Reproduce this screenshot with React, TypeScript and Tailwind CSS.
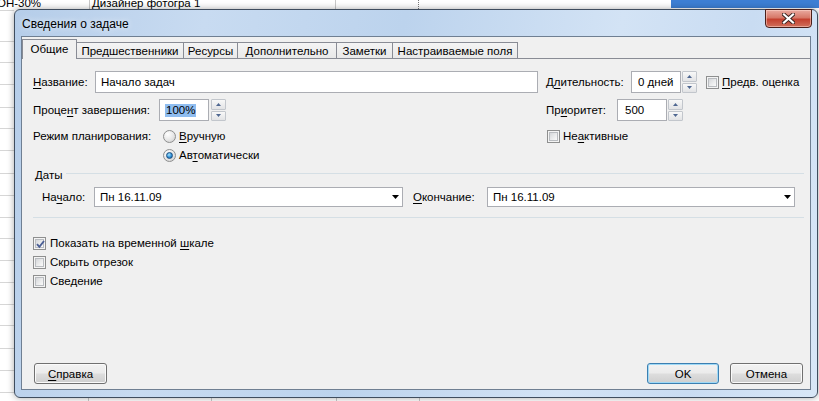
import React from "react";

function U({ children }: { children: React.ReactNode }) {
  return <span className="underline decoration-1 underline-offset-[2px]">{children}</span>;
}

function Check({ checked }: { checked?: boolean }) {
  return (
    <span className="inline-flex h-[13px] w-[13px] shrink-0 items-center justify-center border border-[#8e8f8f] bg-[#f4f4f4] p-[1px]">
      <span className="relative flex h-full w-full items-center justify-center border border-[#b9bcc0] bg-[linear-gradient(135deg,#d5d7da_0%,#e9eaeb_50%,#fafafa_100%)]">
        {checked && (
          <svg width="9" height="9" viewBox="0 0 9 9" className="absolute left-[0px] top-[0px]">
            <path d="M1 4.2 L3.4 6.8 L8 1" stroke="#4b5f95" strokeWidth="1.9" fill="none" />
          </svg>
        )}
      </span>
    </span>
  );
}

function Radio({ checked }: { checked?: boolean }) {
  return (
    <span className="inline-flex h-[13px] w-[13px] shrink-0 items-center justify-center rounded-full border border-[#8e8f8f] bg-[radial-gradient(circle_at_35%_30%,#ffffff_0%,#e6e6e6_55%,#c9c9c9_100%)]">
      {checked && (
        <span className="h-[7px] w-[7px] rounded-full border border-[#1d4f80] bg-[radial-gradient(circle_at_40%_35%,#a8e6ff_0%,#2f8fd6_55%,#164f8c_100%)]" />
      )}
    </span>
  );
}

function Spin() {
  return (
    <div className="flex h-[22px] w-[15px] shrink-0 flex-col gap-[1px]">
      <div className="flex flex-1 items-center justify-center rounded-[1px] border border-[#c2c6cc] bg-[linear-gradient(#f8f8f8,#e2e3e5)]">
        <svg width="5" height="3" viewBox="0 0 5 3">
          <path d="M0 3 L2.5 0 L5 3Z" fill="#4f6791" />
        </svg>
      </div>
      <div className="flex flex-1 items-center justify-center rounded-[1px] border border-[#c2c6cc] bg-[linear-gradient(#f8f8f8,#e2e3e5)]">
        <svg width="5" height="3" viewBox="0 0 5 3">
          <path d="M0 0 L5 0 L2.5 3Z" fill="#4f6791" />
        </svg>
      </div>
    </div>
  );
}

function Combo({ w }: { w: string }) {
  return (
    <div className={`flex h-[20px] ${w} shrink-0 items-center justify-between border border-[#abadb3] bg-white pl-[5px] pr-[3px]`}>
      <span>Пн 16.11.09</span>
      <svg width="7" height="4" viewBox="0 0 7 4">
        <path d="M0 0 H7 L3.5 4Z" fill="#000" />
      </svg>
    </div>
  );
}

function Btn({ children, primary, w }: { children: React.ReactNode; primary?: boolean; w: string }) {
  return (
    <div
      className={`flex h-[21px] ${w} items-center justify-center rounded-[3px] border bg-[linear-gradient(#f2f2f2_0%,#ebebeb_48%,#dddddd_52%,#cfcfcf_100%)] ${
        primary ? "border-[#3c7fb1] shadow-[inset_0_0_0_1px_#9fd9f6]" : "border-[#707070] shadow-[inset_0_0_0_1px_#fafafa]"
      }`}
    >
      {children}
    </div>
  );
}

const rowHeights = [2, 31, 21, 22, 23, 21, 22, 23, 22, 22, 21, 22, 22, 22, 21, 23, 22, 22];

const tabs: { label: string; w: string }[] = [
  { label: "Предшественники", w: "w-[107px]" },
  { label: "Ресурсы", w: "w-[54px]" },
  { label: "Дополнительно", w: "w-[99px]" },
  { label: "Заметки", w: "w-[56px]" },
  { label: "Настраиваемые поля", w: "w-[125px]" },
];

export default function App() {
  return (
    <div className="relative h-[401px] w-[819px] overflow-hidden whitespace-nowrap bg-white font-['Liberation_Sans',Arial,sans-serif] text-[11.5px] leading-[16px] text-black">
      {/* background spreadsheet */}
      <div className="flex h-full w-full flex-col">
        <div className="flex h-[9px] shrink-0 overflow-hidden">
          <div className="h-full w-[90px] shrink-0 overflow-hidden border-r border-[#c8c8c8]">
            <div className="ml-[-3px] mt-[-8px] leading-[22px]">ОН-30%</div>
          </div>
          <div className="h-full w-[246px] shrink-0 overflow-visible border-r border-[#c8c8c8]">
            <div className="ml-[2px] mt-[-8px] leading-[22px]">Дизайнер фотогра 1</div>
          </div>
          <div className="h-full w-[83px] shrink-0 border-r border-dotted border-[#777]" />
          <div className="ml-[252px] h-[8px] flex-1 bg-[#3d7fd4]" />
        </div>
        <div className="flex flex-1">
          <div className="flex w-[14px] shrink-0 flex-col">
            {rowHeights.map((h, i) => (
              <div key={i} className="shrink-0 border-b border-[#d6d6d6]" style={{ height: h }} />
            ))}
          </div>
        </div>
        <div className="flex h-[3px] shrink-0">
          <div className="w-[89px] shrink-0 border-r border-[#c8c8c8]" />
          <div className="w-[123px] shrink-0 border-r border-[#c8c8c8]" />
          <div className="w-[125px] shrink-0 border-r border-[#c8c8c8]" />
          <div className="w-[83px] shrink-0 border-r border-[#c8c8c8]" />
        </div>
      </div>

      {/* dialog window */}
      <div className="absolute left-[14px] top-[9px] flex h-[389px] w-[804px] flex-col rounded-[6px] border border-[#3f4d5e] bg-[linear-gradient(100deg,#b5cde9_0%,#c8dbf1_22%,#bcd3ed_45%,#d3e3f5_70%,#c9dcf2_85%,#d8e7f7_100%)] shadow-[0_0_7px_rgba(0,0,0,0.35)]">
        <div className="flex h-[26px] shrink-0 items-center pl-[7px] pt-[2px] text-[12px] [text-shadow:0_0_6px_rgba(255,255,255,0.9)]">
          Сведения о задаче
        </div>
        <div className="absolute right-[5px] top-[-1px] flex h-[19px] w-[47px] items-center justify-center rounded-b-[4px] border border-[#4a1f1a] bg-[linear-gradient(#e9aaa0_0%,#d77868_45%,#c4402f_55%,#d0705c_100%)] shadow-[inset_0_0_0_1px_rgba(255,220,210,0.5)]">
          <svg width="13" height="11" viewBox="0 0 13 11">
            <path d="M2 1.5 L11 9.5 M11 1.5 L2 9.5" stroke="#3a2320" strokeWidth="4" strokeLinecap="square" />
            <path d="M2 1.5 L11 9.5 M11 1.5 L2 9.5" stroke="#ffffff" strokeWidth="2.2" strokeLinecap="square" />
          </svg>
        </div>
        <div className="mx-[6px] mb-[7px] flex flex-1 flex-col border border-[#6f7f92] bg-[#f0f0f0]">
          {/* tab strip */}
          <div className="flex h-[21px] shrink-0 items-end">
            <div className="relative z-10 mb-[-1px] flex h-[20px] w-[55px] shrink-0 items-center justify-center border-x border-t border-[#898c95] bg-[#f0f0f0] pb-[1px]">
              Общие
            </div>
            {tabs.map((t) => (
              <div
                key={t.label}
                className={`flex h-[16px] ${t.w} shrink-0 items-center justify-center border-r border-t border-[#898c95] bg-[linear-gradient(#f4f4f4,#e9e9e9)]`}
              >
                {t.label}
              </div>
            ))}
          </div>
          {/* panel */}
          <div className="flex flex-1 flex-col border-t border-[#898c95] pl-[11px] pr-[6px] pb-[5px]">
            <div className="mt-[12px] flex h-[22px] items-center">
              <div className="w-[62px] shrink-0">
                <U>Н</U>азвание:
              </div>
              <div className="flex h-[22px] w-[443px] shrink-0 items-center border border-[#abadb3] bg-white pl-[5px]">
                Начало задач
              </div>
              <div className="ml-[8px] w-[85px] shrink-0">
                Д<U>л</U>ительность:
              </div>
              <div className="flex h-[22px] w-[50px] shrink-0 items-center border border-[#abadb3] bg-white pl-[6px]">
                0 дней
              </div>
              <div className="ml-[1px]">
                <Spin />
              </div>
              <div className="ml-[9px] flex items-center">
                <Check />
                <span className="ml-[3px]">
                  <U>П</U>редв. оценка
                </span>
              </div>
            </div>

            <div className="mt-[6px] flex h-[22px] items-center">
              <div className="flex w-[513px] shrink-0 items-center">
                <div className="w-[126px] shrink-0">
                  Проце<U>н</U>т завершения:
                </div>
                <div className="flex h-[22px] w-[50px] shrink-0 items-center border border-[#abadb3] bg-white pl-[5px]">
                  <span className="bg-[#8fbdf0] px-[1px] leading-[13px]">100%</span>
                </div>
                <div className="ml-[2px]">
                  <Spin />
                </div>
              </div>
              <div className="w-[71px] shrink-0">
                Пр<U>и</U>оритет:
              </div>
              <div className="flex h-[22px] w-[50px] shrink-0 items-center border border-[#abadb3] bg-white pl-[7px]">500</div>
              <div className="ml-[1px]">
                <Spin />
              </div>
            </div>

            <div className="mt-[7px] flex h-[16px] items-center">
              <div className="flex w-[513px] shrink-0 items-center">
                <div className="w-[130px] shrink-0">Режим планирования:</div>
                <Radio />
                <span className="ml-[3px]">
                  <U>В</U>ручную
                </span>
              </div>
              <div className="ml-[1px] flex items-center">
                <Check />
                <span className="ml-[3px]">
                  Не<U>а</U>ктивные
                </span>
              </div>
            </div>

            <div className="mt-[3px] flex h-[16px] items-center pl-[130px]">
              <Radio checked />
              <span className="ml-[3px]">
                Ав<U>т</U>оматически
              </span>
            </div>

            <div className="mt-[4px] flex h-[16px] items-center pl-[2px]">
              <span>Даты</span>
              <div className="ml-[4px] mt-[6px] h-0 flex-1 self-start border-t border-[#d5dfe5]" />
            </div>

            <div className="mt-[4px] flex h-[20px] items-center pl-[9px]">
              <div className="w-[52px] shrink-0">
                На<U>ч</U>ало:
              </div>
              <Combo w="w-[309px]" />
              <div className="ml-[10px] w-[74px] shrink-0">
                <U>О</U>кончание:
              </div>
              <Combo w="w-[308px]" />
            </div>

            <div className="mt-[10px] h-0 border-t border-[#d5dfe5]" />

            <div className="mt-[17px] flex flex-col gap-[3px]">
              <div className="flex h-[16px] items-center">
                <Check checked />
                <span className="ml-[4px]">
                  Показать на временной <U>ш</U>кале
                </span>
              </div>
              <div className="flex h-[16px] items-center">
                <Check />
                <span className="ml-[4px]">Скрыть отрезок</span>
              </div>
              <div className="flex h-[16px] items-center">
                <Check />
                <span className="ml-[4px]">Сведение</span>
              </div>
            </div>

            <div className="flex-1" />

            <div className="flex items-center justify-between pl-[1px] pr-[1px]">
              <Btn w="w-[73px]">
                <span>
                  <U>С</U>правка
                </span>
              </Btn>
              <div className="flex gap-[11px]">
                <Btn w="w-[72px]" primary>
                  OK
                </Btn>
                <Btn w="w-[73px]">Отмена</Btn>
              </div>
            </div>
          </div>
        </div>
      </div>
    </div>
  );
}
